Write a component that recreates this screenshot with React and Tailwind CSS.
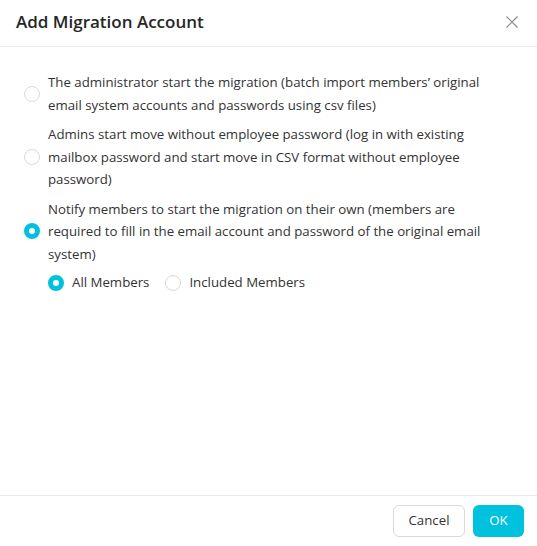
import { useState } from 'react';

const OPTIONS = [
  {
    id: 'admin',
    label:
      'The administrator start the migration (batch import members\u2019 original email system accounts and passwords using csv files)',
  },
  {
    id: 'nopass',
    label:
      'Admins start move without employee password (log in with existing mailbox password and start move in CSV format without employee password)',
  },
  {
    id: 'notify',
    label:
      'Notify members to start the migration on their own (members are required to fill in the email account and password of the original email system)',
  },
];

function Radio({ checked }) {
  return checked ? (
    <span className="w-4 h-4 rounded-full border-[5px] border-[#00c1de] bg-white shrink-0" />
  ) : (
    <span className="w-4 h-4 rounded-full border border-[#d9d9d9] bg-white shrink-0" />
  );
}

export default function App() {
  const [mode, setMode] = useState('notify');
  const [scope, setScope] = useState('all');

  return (
    <div
      className="h-screen flex flex-col bg-white text-[#333] text-[13.25px]"
      style={{ fontFamily: '"Open Sans", "Noto Sans", sans-serif' }}
    >
      {/* Header */}
      <div className="h-[47px] shrink-0 flex items-center justify-between pl-4 pr-[18px] pb-[2px] border-b border-[#ebebeb]">
        <h2 className="text-[17px] font-semibold text-[#262626]">Add Migration Account</h2>
        <button className="text-[#8c8c8c]">
          <svg width="14" height="14" viewBox="0 0 14 14" fill="none" stroke="currentColor" strokeWidth="1.2">
            <path d="M1.5 1.5l11 11M12.5 1.5l-11 11" />
          </svg>
        </button>
      </div>

      {/* Body */}
      <div className="flex-1 px-6 pt-6 flex flex-col gap-[7px]">
        {OPTIONS.map((opt) => (
          <label key={opt.id} className="flex items-center gap-2 cursor-pointer" onClick={() => setMode(opt.id)}>
            <Radio checked={mode === opt.id} />
            <span className="leading-[22.5px] pr-6">{opt.label}</span>
          </label>
        ))}
        {mode === 'notify' && (
          <div className="flex items-center gap-4 pl-6 h-[22px]">
            <label className="flex items-center gap-2 cursor-pointer" onClick={() => setScope('all')}>
              <Radio checked={scope === 'all'} />
              <span>All Members</span>
            </label>
            <label className="flex items-center gap-2 cursor-pointer" onClick={() => setScope('included')}>
              <Radio checked={scope === 'included'} />
              <span>Included Members</span>
            </label>
          </div>
        )}
      </div>

      {/* Footer */}
      <div className="h-[51px] shrink-0 border-t border-[#ebebeb] flex items-start justify-end gap-2 pt-[9px] pr-[13px]">
        <button className="h-8 w-[72px] rounded-md border border-[#d9d9d9] bg-white text-[#333]">Cancel</button>
        <button className="h-8 w-[51px] rounded-md bg-[#00c1de] text-white">OK</button>
      </div>
    </div>
  );
}
